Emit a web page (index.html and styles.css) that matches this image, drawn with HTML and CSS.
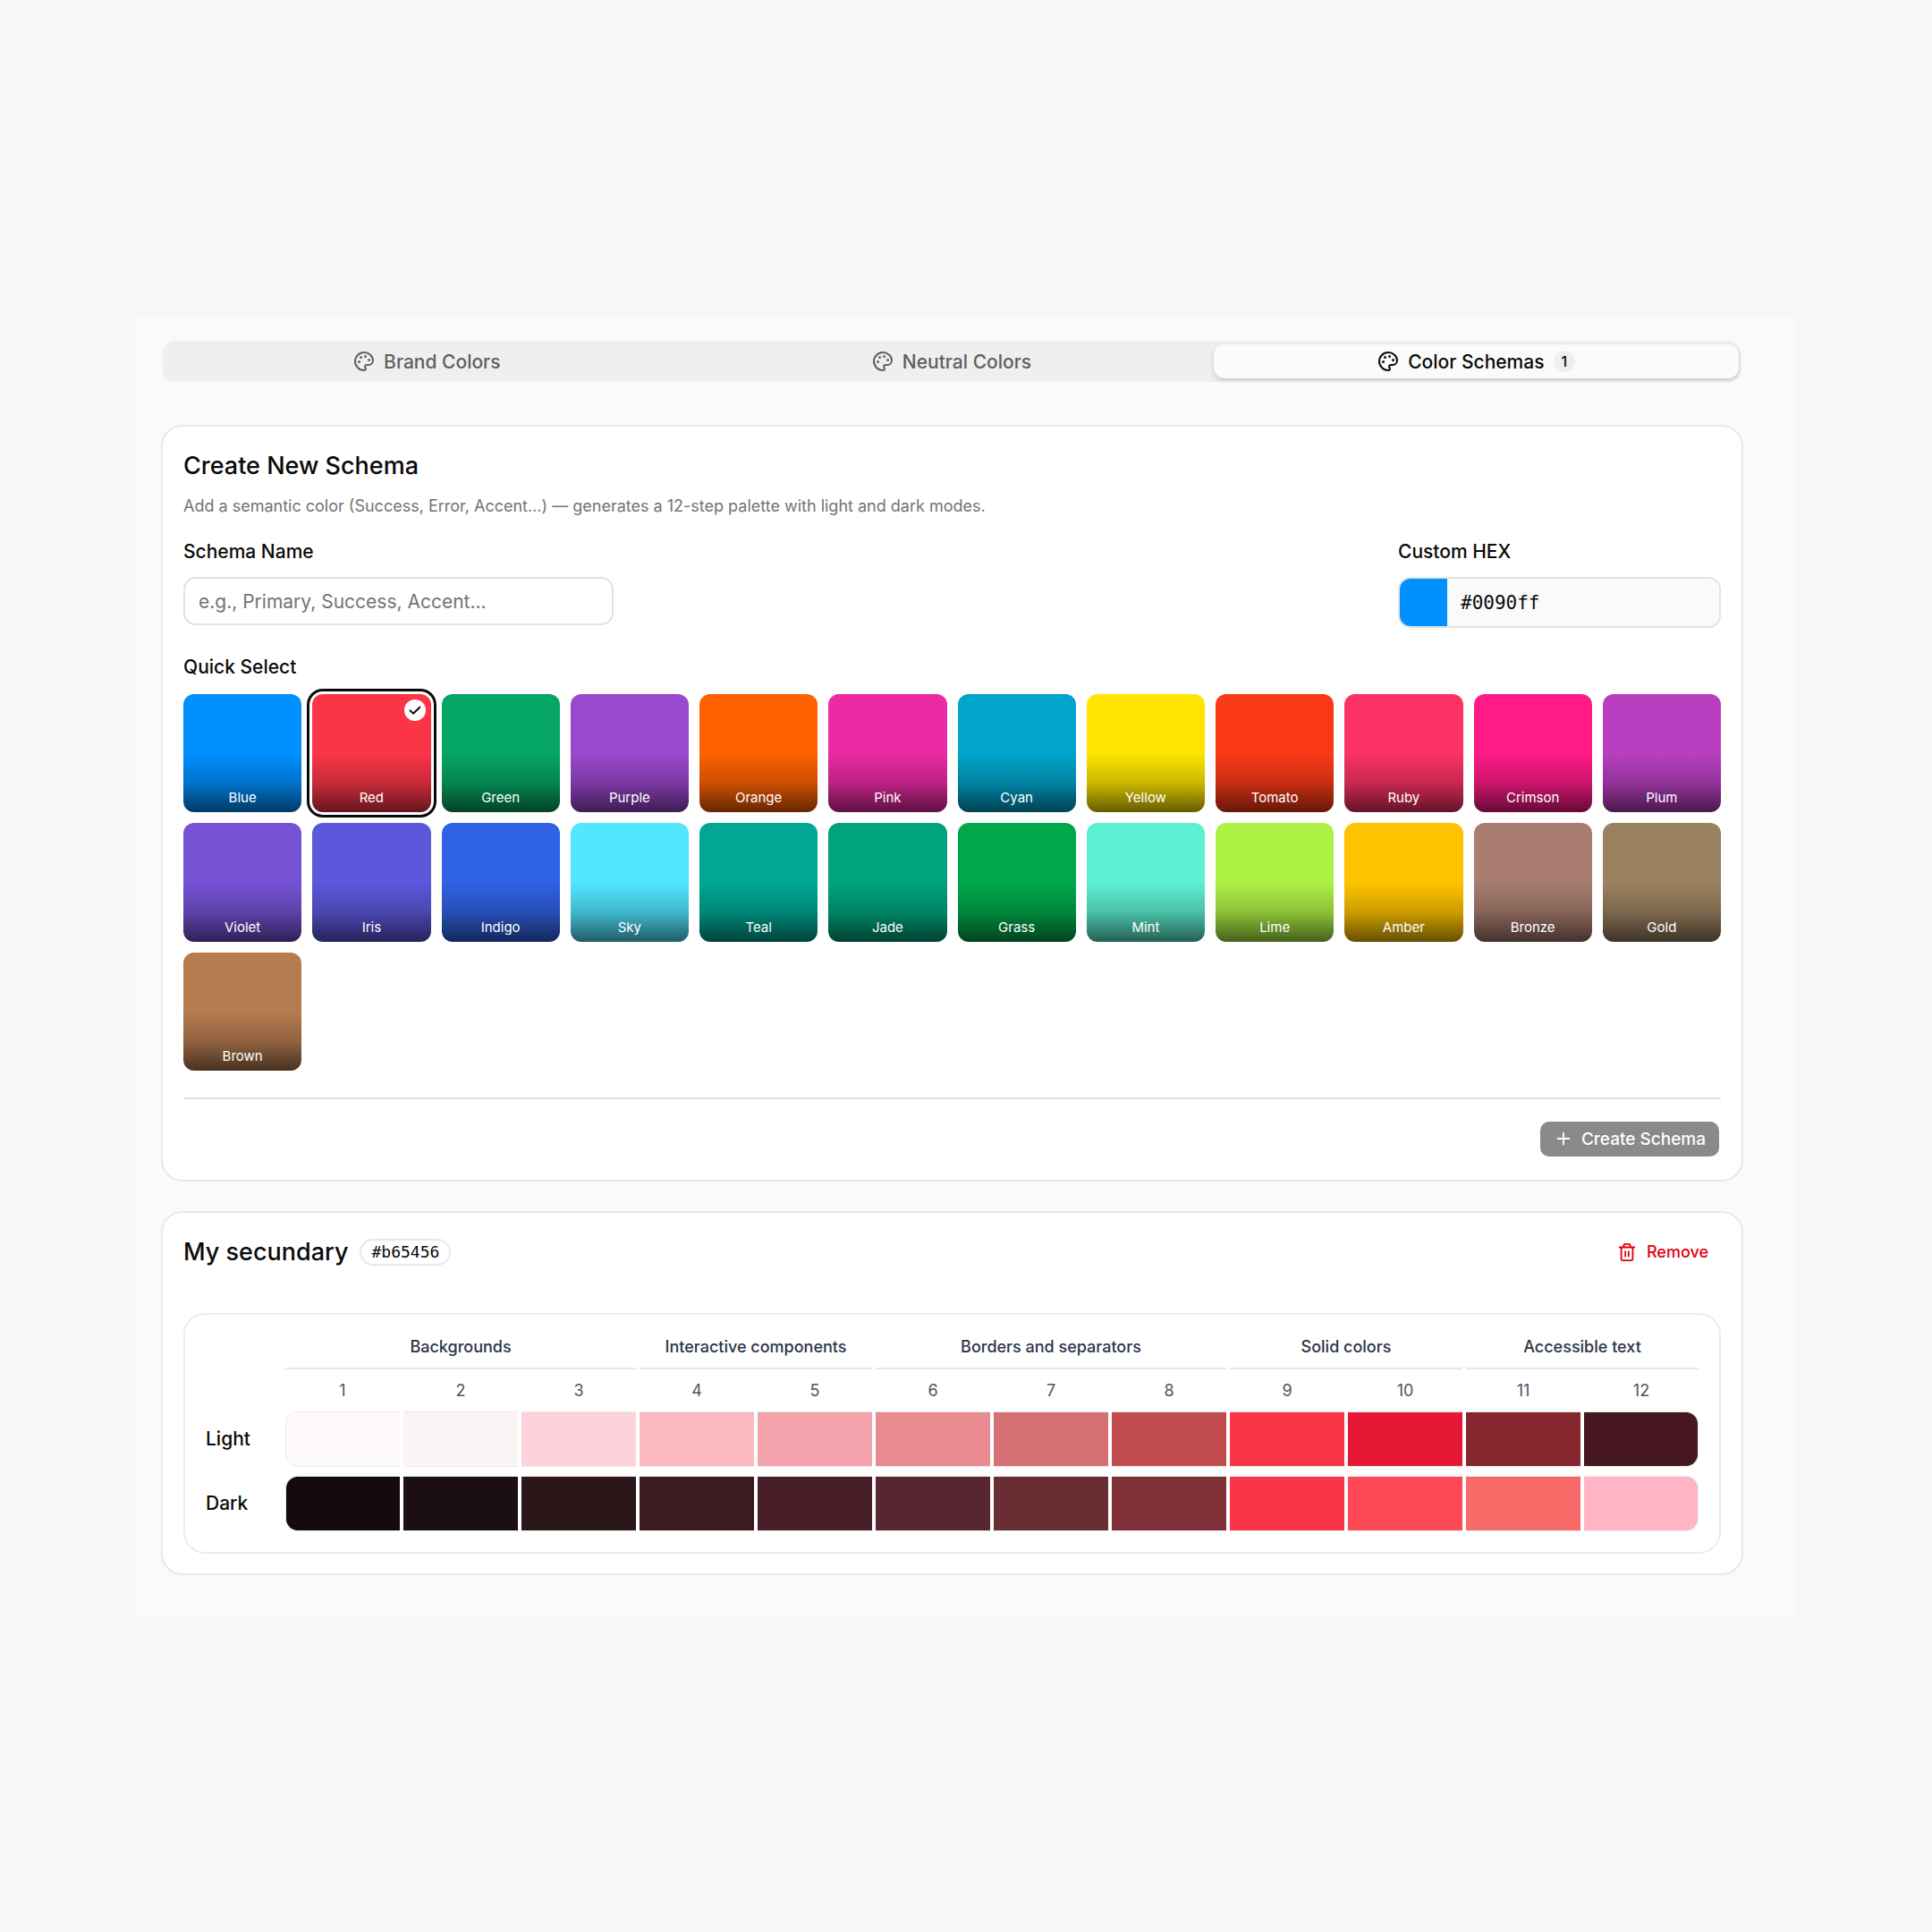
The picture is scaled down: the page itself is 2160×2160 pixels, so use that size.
FILE: index.html
```
<!DOCTYPE html>
<html lang="en">
  <head>
    <meta charset="UTF-8" />
    <meta name="viewport" content="width=device-width, initial-scale=1.0" />
    <title>Color Schemas</title>
    <link rel="stylesheet" href="styles.css">
  </head>
  <body>
    <svg class="sprite" aria-hidden="true">
      <symbol id="icon-palette" viewBox="0 0 24 24">
        <path d="M12 22a1 1 0 0 1 0-20 10 9 0 0 1 10 9 5 5 0 0 1-5 5h-2.25a1.75 1.75 0 0 0-1.4 2.8l.3.4a1.75 1.75 0 0 1-1.4 2.8z" />
        <circle cx="13.5" cy="6.5" r=".5" fill="currentColor" />
        <circle cx="17.5" cy="10.5" r=".5" fill="currentColor" />
        <circle cx="6.5" cy="12.5" r=".5" fill="currentColor" />
        <circle cx="8.5" cy="7.5" r=".5" fill="currentColor" />
      </symbol>
    </svg>

    <main class="panel">
      <nav class="tabs" role="tablist">
        <button class="tab" role="tab" aria-selected="false">
          <svg class="icon"><use href="#icon-palette" /></svg>
          Brand Colors
        </button>
        <button class="tab" role="tab" aria-selected="false">
          <svg class="icon"><use href="#icon-palette" /></svg>
          Neutral Colors
        </button>
        <button class="tab active" role="tab" aria-selected="true">
          <svg class="icon"><use href="#icon-palette" /></svg>
          Color Schemas
          <span class="count">1</span>
        </button>
      </nav>

      <section class="card">
        <h2 class="title">Create New Schema</h2>
        <p class="description">Add a semantic color (Success, Error, Accent...) — generates a 12-step palette with light and dark modes.</p>

        <div class="fields">
          <div class="field name-field">
            <label for="schema_name">Schema Name</label>
            <input class="input" id="schema_name" name="schema_name" type="text" placeholder="e.g., Primary, Success, Accent..." />
          </div>
          <div class="field hex-field">
            <label for="custom_hex">Custom HEX</label>
            <div class="hex">
              <span class="hex-color"></span>
              <input class="hex-input" id="custom_hex" name="custom_hex" type="text" value="#0090ff" />
            </div>
          </div>
        </div>

        <h3 class="subtitle">Quick Select</h3>
        <div class="swatches">
          <button class="swatch blue"><span>Blue</span></button>
          <button class="swatch red selected">
            <span>Red</span>
            <svg class="check" viewBox="0 0 24 24"><path d="M4 12.5l5 5L20 7" /></svg>
          </button>
          <button class="swatch green"><span>Green</span></button>
          <button class="swatch purple"><span>Purple</span></button>
          <button class="swatch orange"><span>Orange</span></button>
          <button class="swatch pink"><span>Pink</span></button>
          <button class="swatch cyan"><span>Cyan</span></button>
          <button class="swatch yellow"><span>Yellow</span></button>
          <button class="swatch tomato"><span>Tomato</span></button>
          <button class="swatch ruby"><span>Ruby</span></button>
          <button class="swatch crimson"><span>Crimson</span></button>
          <button class="swatch plum"><span>Plum</span></button>
          <button class="swatch violet"><span>Violet</span></button>
          <button class="swatch iris"><span>Iris</span></button>
          <button class="swatch indigo"><span>Indigo</span></button>
          <button class="swatch sky"><span>Sky</span></button>
          <button class="swatch teal"><span>Teal</span></button>
          <button class="swatch jade"><span>Jade</span></button>
          <button class="swatch grass"><span>Grass</span></button>
          <button class="swatch mint"><span>Mint</span></button>
          <button class="swatch lime"><span>Lime</span></button>
          <button class="swatch amber"><span>Amber</span></button>
          <button class="swatch bronze"><span>Bronze</span></button>
          <button class="swatch gold"><span>Gold</span></button>
          <button class="swatch brown"><span>Brown</span></button>
        </div>

        <div class="actions">
          <button class="create" disabled>
            <svg class="icon-plus" viewBox="0 0 24 24"><path d="M5 12h14M12 5v14" /></svg>
            Create Schema
          </button>
        </div>
      </section>

      <section class="card">
        <div class="schema-header">
          <h2 class="title">My secundary</h2>
          <span class="badge">#b65456</span>
          <button class="remove">
            <svg class="icon-trash" viewBox="0 0 24 24"><path d="M3 6h18M19 6v14a2 2 0 0 1-2 2H7a2 2 0 0 1-2-2V6M8 6V4a2 2 0 0 1 2-2h4a2 2 0 0 1 2 2v2M10 11v6M14 11v6" /></svg>
            Remove
          </button>
        </div>

        <div class="scale-box">
          <table class="scale">
            <colgroup>
              <col class="label-col" />
              <col span="12" />
            </colgroup>
            <thead>
              <tr class="groups">
                <td></td>
                <th colspan="3">Backgrounds</th>
                <th colspan="2">Interactive components</th>
                <th colspan="3">Borders and separators</th>
                <th colspan="2">Solid colors</th>
                <th colspan="2">Accessible text</th>
              </tr>
              <tr class="steps">
                <td></td>
                <th>1</th>
                <th>2</th>
                <th>3</th>
                <th>4</th>
                <th>5</th>
                <th>6</th>
                <th>7</th>
                <th>8</th>
                <th>9</th>
                <th>10</th>
                <th>11</th>
                <th>12</th>
              </tr>
            </thead>
            <tbody>
              <tr class="colors">
                <th>Light</th>
                <td style="background-color: #fffafa"></td>
                <td style="background-color: #fbf4f4"></td>
                <td style="background-color: #fcd3da"></td>
                <td style="background-color: #fab9be"></td>
                <td style="background-color: #f4a2ab"></td>
                <td style="background-color: #e88c92"></td>
                <td style="background-color: #d57174"></td>
                <td style="background-color: #c24b50"></td>
                <td style="background-color: #fb3547"></td>
                <td style="background-color: #e51935"></td>
                <td style="background-color: #86262e"></td>
                <td style="background-color: #461721"></td>
              </tr>
              <tr class="spacer"><td colspan="13"></td></tr>
              <tr class="colors">
                <th>Dark</th>
                <td style="background-color: #140a0b"></td>
                <td style="background-color: #1b0f11"></td>
                <td style="background-color: #2b1719"></td>
                <td style="background-color: #3b1b21"></td>
                <td style="background-color: #481f29"></td>
                <td style="background-color: #582631"></td>
                <td style="background-color: #692e33"></td>
                <td style="background-color: #803137"></td>
                <td style="background-color: #fb3547"></td>
                <td style="background-color: #ff4957"></td>
                <td style="background-color: #f66a68"></td>
                <td style="background-color: #ffb5c5"></td>
              </tr>
            </tbody>
          </table>
        </div>
      </section>
    </main>
  </body>
</html>
```
FILE: styles.css
```
* {
  box-sizing: border-box;
}

body {
  margin: 0;
  min-height: 100vh;
  display: flex;
  align-items: center;
  padding: 0 153px;
  background-color: #f7f7f7;
  color: #0a0a0a;
  font-family: Inter, "Liberation Sans", sans-serif;
  font-size: 21px;
}

button,
input {
  font: inherit;
  color: inherit;
}

svg {
  fill: none;
  stroke: currentColor;
  stroke-width: 2;
  stroke-linecap: round;
  stroke-linejoin: round;
}

.sprite {
  position: absolute;
  width: 0;
  height: 0;
}

.panel {
  flex: 1;
  padding: 27px 58px 45px 27px;
  background-color: #fafafa;
}

/* Tabs */
.tabs {
  display: grid;
  grid-template-columns: repeat(3, 1fr);
  margin: 0 3px 48px 2px;
  padding: 4px 2px;
  border-radius: 14px;
  background-color: #efefef;
}

.tab {
  display: flex;
  justify-content: center;
  align-items: center;
  gap: 10px;
  height: 38px;
  padding: 0;
  border: none;
  border-radius: 12px;
  background: none;
  color: #5f5f5f;
  font-weight: 500;
}

.tab.active {
  background-color: #fbfbfb;
  color: #0a0a0a;
  box-shadow: 0 2px 5px rgba(0, 0, 0, 0.18);
}

.icon {
  width: 24px;
  height: 24px;
}

.count {
  padding: 0 9px;
  border-radius: 12px;
  background-color: #efefef;
  font-size: 16px;
  line-height: 24px;
}

/* Cards */
.card {
  padding: 22px 23px;
  border: 2px solid #e8e8e8;
  border-radius: 24px;
  background-color: #fff;
}

.card + .card {
  margin-top: 33px;
}

.title {
  margin: 0;
  font-size: 27px;
  font-weight: 500;
  line-height: 44px;
}

.description {
  margin: 8px 0 0;
  color: #737373;
  font-size: 18px;
  line-height: 30px;
}

/* Form */
.fields {
  display: flex;
  justify-content: space-between;
  margin-top: 20px;
}

.field {
  display: flex;
  flex-direction: column;
  gap: 12px;
  font-weight: 500;
  line-height: 32px;
}

.name-field {
  width: 28%;
}

.hex-field {
  width: 21%;
}

.input {
  height: 54px;
  padding: 0 15px;
  border: 2px solid #e2e2e2;
  border-radius: 14px;
  background-color: #fff;
  font-weight: 400;
}

.input::placeholder {
  color: #737373;
}

.hex {
  display: flex;
  height: 57px;
  border: 2px solid #e2e2e2;
  border-radius: 14px;
  overflow: hidden;
}

.hex-color {
  width: 53px;
  background-color: #0090ff;
}

.hex-input {
  flex: 1;
  min-width: 0;
  padding: 0 15px;
  border: none;
  background-color: #fafafa;
  font-family: "DejaVu Sans Mono", "Liberation Mono", monospace;
  font-weight: 400;
}

/* Quick select */
.subtitle {
  margin: 28px 0 14px;
  font-size: 21px;
  font-weight: 500;
  line-height: 32px;
}

.swatches {
  display: grid;
  grid-template-columns: repeat(12, 1fr);
  gap: 12px;
}

.swatch {
  position: relative;
  display: flex;
  justify-content: center;
  align-items: flex-end;
  aspect-ratio: 1;
  padding: 0 0 6px;
  border: none;
  border-radius: 12px;
  background-image: linear-gradient(to top, rgba(0, 0, 0, 0.6), rgba(0, 0, 0, 0.2) 25%, rgba(0, 0, 0, 0) 50%);
  color: #fff;
  font-size: 15px;
  font-weight: 400;
  line-height: 20px;
}

.swatch.selected {
  box-shadow: 0 0 0 3px #fff, 0 0 0 6px #0a0a0a;
}

.check {
  position: absolute;
  top: 6px;
  right: 6px;
  width: 24px;
  height: 24px;
  padding: 4px;
  border-radius: 50%;
  background-color: #fff;
  color: #0a0a0a;
  stroke-width: 3;
}

.blue { background-color: #0090ff; }
.red { background-color: #fb3547; }
.green { background-color: #05a663; }
.purple { background-color: #9a48cd; }
.orange { background-color: #ff6200; }
.pink { background-color: #eb2aa3; }
.cyan { background-color: #00a4cd; }
.yellow { background-color: #ffe500; }
.tomato { background-color: #fa3a16; }
.ruby { background-color: #fb3263; }
.crimson { background-color: #ff1a86; }
.plum { background-color: #b83fc0; }
.violet { background-color: #7552d4; }
.iris { background-color: #5c58dc; }
.indigo { background-color: #3062e4; }
.sky { background-color: #50e7ff; }
.teal { background-color: #00a893; }
.jade { background-color: #00a37e; }
.grass { background-color: #00a84a; }
.mint { background-color: #5df0d2; }
.lime { background-color: #aef145; }
.amber { background-color: #ffc400; }
.bronze { background-color: #a87c6f; }
.gold { background-color: #9a8160; }
.brown { background-color: #b57c50; }

.actions {
  display: flex;
  justify-content: flex-end;
  margin-top: 30px;
  padding: 25px 2px 4px;
  border-top: 2px solid #e2e2e2;
}

.create {
  display: flex;
  align-items: center;
  gap: 9px;
  height: 39px;
  padding: 0 15px;
  border: none;
  border-radius: 10px;
  background-color: #8a8a8a;
  color: #fff;
  font-size: 19px;
  font-weight: 500;
}

.icon-plus {
  width: 22px;
  height: 22px;
}

/* Saved schema */
.schema-header {
  display: flex;
  align-items: center;
  gap: 13px;
}

.badge {
  padding: 0 11px;
  border: 2px solid #e8e8e8;
  border-radius: 15px;
  font-family: "DejaVu Sans Mono", "Liberation Mono", monospace;
  font-size: 18px;
  line-height: 26px;
}

.remove {
  display: flex;
  align-items: center;
  gap: 11px;
  margin-left: auto;
  padding: 0 14px;
  border: none;
  background: none;
  color: #e0000f;
  font-size: 18px;
  font-weight: 500;
}

.icon-trash {
  width: 22px;
  height: 22px;
}

.scale-box {
  margin-top: 46px;
  padding: 16px 19px 23px;
  border: 2px solid #ececec;
  border-radius: 24px;
}

.scale {
  width: 100%;
  table-layout: fixed;
  border-collapse: separate;
  border-spacing: 4px 0;
}

.scale th,
.scale td {
  padding: 0;
}

.label-col {
  width: 85px;
}

.scale .groups th {
  height: 45px;
  padding-bottom: 4px;
  border-bottom: 2px solid #e6e7ea;
  color: #2b3548;
  font-size: 18px;
  font-weight: 500;
}

.steps th {
  height: 47px;
  color: #4b5563;
  font-size: 18px;
  font-weight: 400;
}

.colors th {
  height: 62px;
  font-size: 21px;
  font-weight: 500;
  text-align: left;
}

.colors td {
  border: 1px solid #ececec;
  border-width: 1px 0;
}

.colors td:nth-child(2) {
  border-left-width: 1px;
  border-radius: 14px 0 0 14px;
}

.colors td:last-child {
  border-right-width: 1px;
  border-radius: 0 14px 14px 0;
}

.spacer td {
  height: 10px;
}
```
